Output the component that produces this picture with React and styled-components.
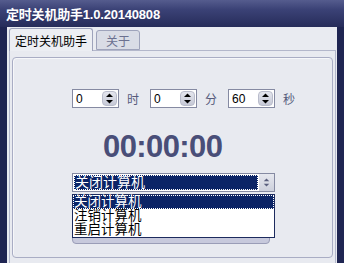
import React from "react";
import styled, { createGlobalStyle } from "styled-components";

const Global = createGlobalStyle`
  html, body {
    margin: 0;
    padding: 0;
    background: #1e2450;
  }
`;

const cjk = `"Liberation Sans", "Noto Sans CJK SC", sans-serif`;

const Window = styled.div`
  width: 344px;
  height: 263px;
  overflow: hidden;
  display: flex;
  flex-direction: column;
  background: #1f2552;
  font-family: ${cjk};
`;

const TitleBar = styled.div`
  height: 27px;
  flex-shrink: 0;
  display: flex;
  align-items: center;
  padding-left: 6px;
  background: linear-gradient(#555c8e 0%, #3b4276 35%, #262c5a 100%);
  color: #ffffff;
  font-size: 13px;
  font-weight: bold;
  letter-spacing: -0.2px;
`;

const Client = styled.div`
  flex: 1;
  margin: 0 7px 0 7px;
  background: #e9ebf1;
  display: flex;
  flex-direction: column;
`;

const TabRow = styled.div`
  height: 23px;
  flex-shrink: 0;
  display: flex;
  align-items: flex-end;
  gap: 3px;
  padding-left: 2px;
`;

const Tab = styled.div`
  height: ${(p) => (p.$active ? "23px" : "20px")};
  box-sizing: border-box;
  padding: 0 ${(p) => (p.$active ? "5px" : "9px")};
  display: flex;
  align-items: center;
  border: 1px solid #9ea3bb;
  border-bottom: ${(p) => (p.$active ? "none" : "1px solid #9ea3bb")};
  border-radius: 3px 3px 0 0;
  background: ${(p) => (p.$active ? "#eceef3" : "#d9dce6")};
  color: ${(p) => (p.$active ? "#000000" : "#6b7090")};
  font-size: 12px;
  margin-bottom: ${(p) => (p.$active ? "-1px" : "0")};
  position: relative;
  z-index: 1;
`;

const Panel = styled.div`
  flex: 1;
  margin: 0 1px 0 2px;
  border: 1px solid #b3b7cb;
  border-bottom: none;
  background: #e8eaf0;
  padding: 6px 2px 0 2px;
  display: flex;
  flex-direction: column;
`;

const GroupBox = styled.div`
  height: 201px;
  box-sizing: border-box;
  border: 1px solid #a9adc4;
  border-radius: 4px;
  box-shadow: inset 1px 1px 0 #f6f7fa;
  padding: 31px 0 0 59px;
  display: flex;
  flex-direction: column;
  align-items: flex-start;
  position: relative;
`;

const TimeRow = styled.div`
  display: flex;
  align-items: center;
  height: 19px;
`;

const SpinBox = styled.div`
  width: 47px;
  height: 19px;
  box-sizing: border-box;
  border: 1px solid #858aa2;
  background: #ffffff;
  display: flex;
  align-items: center;
  justify-content: space-between;
  padding: 0 1px 0 3px;
  font-size: 12px;
  color: #000;
`;

const SpinButton = styled.div`
  width: 15px;
  height: 15px;
  border-radius: 4px;
  background: linear-gradient(#e4e6ee, #c6c9d6);
  border: 1px solid #b9bccb;
  box-sizing: border-box;
  display: flex;
  align-items: center;
  justify-content: center;
`;

const Unit = styled.span`
  width: 12px;
  margin: 0 11px 0 8px;
  font-size: 12px;
  color: #565b7c;
`;

const Clock = styled.div`
  margin: 21px 0 0 31px;
  font-size: 31px;
  line-height: 36px;
  font-weight: bold;
  color: #494e78;
  letter-spacing: -0.6px;
  font-family: "Liberation Sans", sans-serif;
`;

const ComboWrap = styled.div`
  margin-top: 8px;
  position: relative;
`;

const Combo = styled.div`
  width: 203px;
  height: 19px;
  box-sizing: border-box;
  border: 1px solid #858aa2;
  background: #ffffff;
  display: flex;
  align-items: stretch;
`;

const ComboField = styled.div`
  flex: 1;
  margin: 1px;
  background: #0b2466;
  outline: 1px dotted #ffffff;
  outline-offset: -1px;
  color: #ffffff;
  font-size: 14px;
  line-height: 15px;
  padding-left: 1px;
`;

const ComboArrow = styled.div`
  width: 15px;
  background: linear-gradient(#e6e8ef, #cdd0dc);
  display: flex;
  align-items: center;
  justify-content: center;
`;

const HiddenButton = styled.div`
  margin-top: 4px;
  width: 198px;
  height: 48px;
  box-sizing: border-box;
  border: 1px solid #9a9db7;
  border-radius: 4px;
  background: #c7c9dc;
`;

const DropList = styled.div`
  position: absolute;
  top: 21px;
  left: 0;
  width: 203px;
  box-sizing: border-box;
  border: 1px solid #1d2b5e;
  background: #ffffff;
  z-index: 2;
`;

const Item = styled.div`
  height: 14px;
  line-height: 14px;
  font-size: 13.5px;
  padding-left: 1px;
  background: ${(p) => (p.$selected ? "#0b2466" : "transparent")};
  color: ${(p) => (p.$selected ? "#ffffff" : "#000000")};
  outline: ${(p) => (p.$selected ? "1px dotted #ffffff" : "none")};
  outline-offset: -1px;
`;

function Arrows({ color = "#000", size = 9 }) {
  return (
    <svg width={size} height={size + 2} viewBox="0 0 9 11">
      <path d="M4.5 0.5 L8 4 L1 4 Z" fill={color} />
      <path d="M4.5 10.5 L8 7 L1 7 Z" fill={color} />
    </svg>
  );
}

function Spinner({ value }) {
  return (
    <SpinBox>
      <span>{value}</span>
      <SpinButton>
        <Arrows />
      </SpinButton>
    </SpinBox>
  );
}

export default function App() {
  return (
    <>
      <Global />
      <Window>
        <TitleBar>定时关机助手1.0.20140808</TitleBar>
        <Client>
          <TabRow>
            <Tab $active>定时关机助手</Tab>
            <Tab>关于</Tab>
          </TabRow>
          <Panel>
            <GroupBox>
              <TimeRow>
                <Spinner value="0" />
                <Unit>时</Unit>
                <Spinner value="0" />
                <Unit>分</Unit>
                <Spinner value="60" />
                <Unit>秒</Unit>
              </TimeRow>
              <Clock>00:00:00</Clock>
              <ComboWrap>
                <Combo>
                  <ComboField>关闭计算机</ComboField>
                  <ComboArrow>
                    <Arrows color="#5a5f7e" size={7} />
                  </ComboArrow>
                </Combo>
                <HiddenButton />
                <DropList>
                  <Item $selected>关闭计算机</Item>
                  <Item>注销计算机</Item>
                  <Item>重启计算机</Item>
                </DropList>
              </ComboWrap>
            </GroupBox>
          </Panel>
        </Client>
      </Window>
    </>
  );
}
